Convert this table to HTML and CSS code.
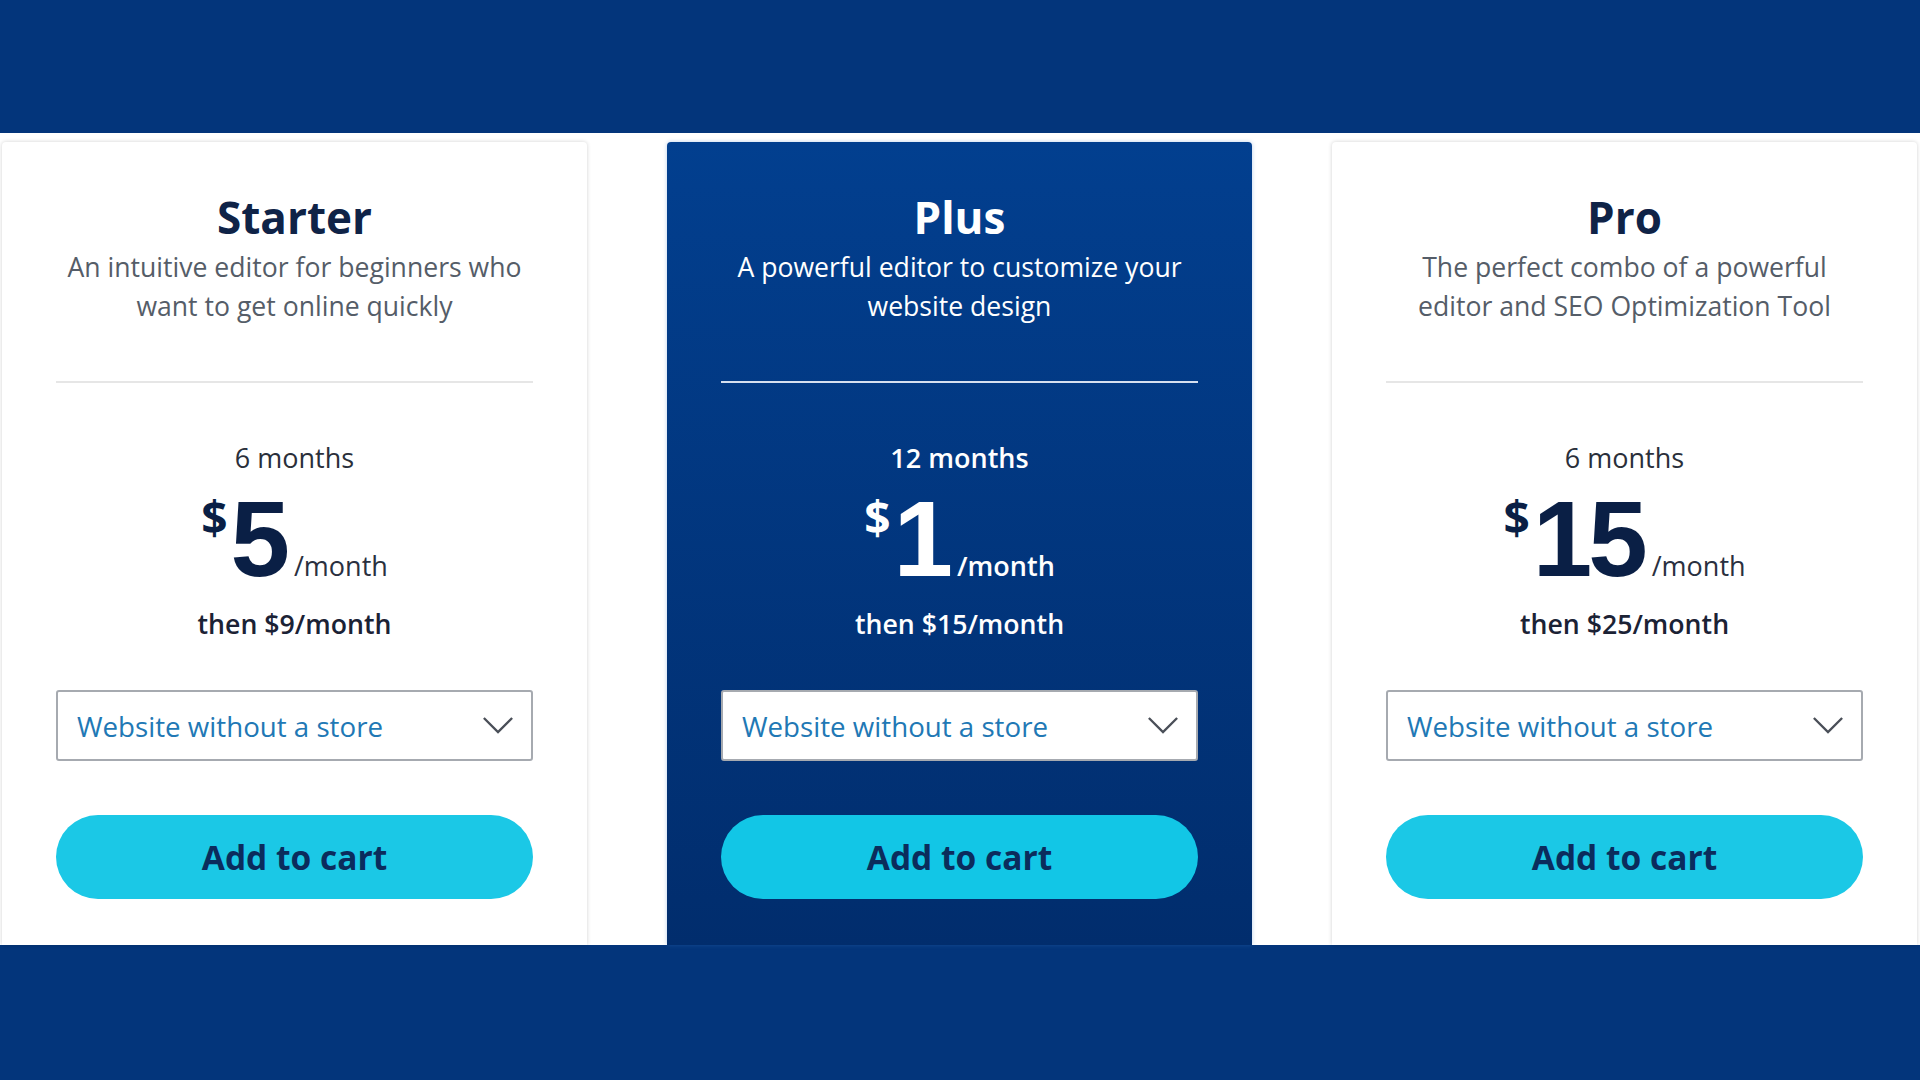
FILE: index.html
```html
<!DOCTYPE html>
<html lang="en">
<head>
  <meta charset="UTF-8">
  <title>Plans</title>
  <link rel="stylesheet" href="styles.css">
</head>
<body>
  <div class="band"></div>

  <div class="plans">
    <div class="plan">
      <h2 class="plan-name">Starter</h2>
      <p class="plan-desc">An intuitive editor for beginners who want to get online quickly</p>
      <hr class="divider">
      <div class="term">6 months</div>
      <div class="price">
        <span class="currency">$</span><span class="amount">5</span><span class="per">/month</span>
      </div>
      <div class="then">then $9/month</div>
      <div class="picker">
        <span>Website without a store</span>
        <svg class="chevron" viewBox="0 0 34 20"><path d="M2 2 L17 17 L32 2"/></svg>
      </div>
      <button class="cart">Add to cart</button>
    </div>

    <div class="plan featured">
      <h2 class="plan-name">Plus</h2>
      <p class="plan-desc">A powerful editor to customize your website design</p>
      <hr class="divider">
      <div class="term">12 months</div>
      <div class="price">
        <span class="currency">$</span><span class="amount">1</span><span class="per">/month</span>
      </div>
      <div class="then">then $15/month</div>
      <div class="picker">
        <span>Website without a store</span>
        <svg class="chevron" viewBox="0 0 34 20"><path d="M2 2 L17 17 L32 2"/></svg>
      </div>
      <button class="cart">Add to cart</button>
    </div>

    <div class="plan">
      <h2 class="plan-name">Pro</h2>
      <p class="plan-desc">The perfect combo of a powerful editor and SEO Optimization Tool</p>
      <hr class="divider">
      <div class="term">6 months</div>
      <div class="price">
        <span class="currency">$</span><span class="amount">15</span><span class="per">/month</span>
      </div>
      <div class="then">then $25/month</div>
      <div class="picker">
        <span>Website without a store</span>
        <svg class="chevron" viewBox="0 0 34 20"><path d="M2 2 L17 17 L32 2"/></svg>
      </div>
      <button class="cart">Add to cart</button>
    </div>
  </div>

  <div class="band bottom"></div>
</body>
</html>
```

FILE: styles.css
```css
body {
  margin: 0;
  font-family: "Open Sans", "Noto Sans", sans-serif;
  background: #fff;
  overflow: hidden;
}
.band {
  height: 133px;
  background: #03357b;
}
.band.bottom {
  height: 135px;
}
.plans {
  display: flex;
  gap: 80px;
  padding: 9px 3px 0 2px;
  height: 803px;
}
.plan {
  width: 585px;
  box-sizing: border-box;
  padding: 50px 54px 0;
  background: #fff;
  border-radius: 4px 4px 0 0;
  box-shadow: 0 0 4px rgba(0, 0, 0, 0.18);
  text-align: center;
  color: #0f2347;
}
.plan.featured {
  background: linear-gradient(to bottom, #023f8f 0%, #012d6d 100%);
  box-shadow: 0 0 4px rgba(60, 120, 200, 0.35);
  color: #fff;
}
.plan-name {
  margin: 0;
  font-size: 44px;
  line-height: 50px;
  font-weight: 700;
}
.plan-desc {
  margin: 6px 0 0;
  font-size: 26.6px;
  line-height: 39px;
  color: #555d68;
}
.featured .plan-desc {
  color: #fff;
  font-weight: 500;
}
.divider {
  margin: 55px 0 0;
  border: 0;
  border-top: 2px solid #e6e6e6;
}
.featured .divider {
  border-top-color: #d6e0f0;
}
.term {
  margin-top: 59px;
  font-size: 27px;
  line-height: 32px;
  font-weight: 500;
  color: #2a2f3a;
}
.featured .term {
  color: #fff;
  font-weight: 600;
}
.price {
  display: flex;
  justify-content: center;
  align-items: baseline;
  margin-top: 22px;
  color: #0a1f45;
}
.featured .price {
  color: #fff;
}
.currency {
  align-self: flex-start;
  margin-top: -4px;
  margin-right: 3px;
  font-size: 46px;
  line-height: 50px;
  font-weight: 700;
}
.amount {
  font-family: "Liberation Sans", Arial, sans-serif;
  font-size: 107px;
  line-height: 86px;
  font-weight: 700;
  letter-spacing: -4px;
}
.per {
  margin-left: 8px;
  font-size: 27px;
  line-height: 32px;
  font-weight: 500;
  color: #2a3040;
}
.featured .per {
  color: #fff;
  font-weight: 600;
}
.then {
  margin-top: 26px;
  font-size: 26.7px;
  line-height: 32px;
  font-weight: 600;
  color: #1b2235;
}
.featured .then {
  color: #fff;
}
.picker {
  display: flex;
  justify-content: space-between;
  align-items: center;
  margin-top: 50px;
  height: 71px;
  box-sizing: border-box;
  padding: 0 17px 0 19px;
  border: 2px solid #a6aab0;
  border-radius: 3px;
  background: #fff;
  font-size: 27.7px;
  font-weight: 500;
  color: #2178b5;
}
.chevron {
  width: 32px;
  height: 19px;
  fill: none;
  stroke: #4a4f58;
  stroke-width: 2.5;
}
.cart {
  display: block;
  width: 100%;
  height: 84px;
  margin-top: 54px;
  border: 0;
  border-radius: 42px;
  background: #1bc8e6;
  font-family: inherit;
  font-size: 33.5px;
  font-weight: 700;
  color: #0b2c5c;
}
.featured .cart {
  background: #12c6e6;
}
```
